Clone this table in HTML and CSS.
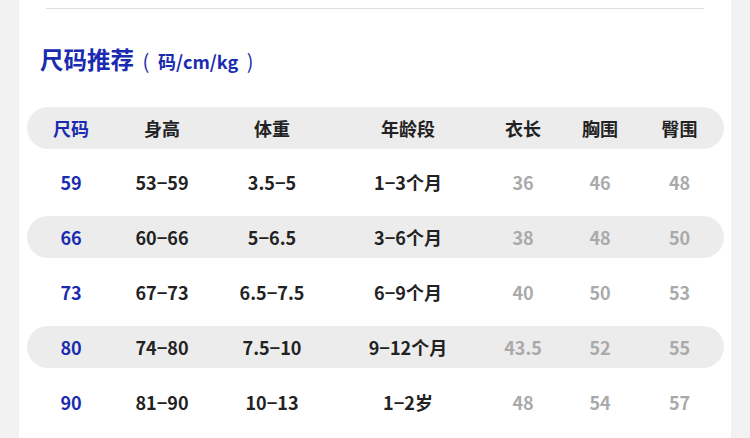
FILE: index.html
```html
<!DOCTYPE html>
<html lang="zh">
<head>
<meta charset="utf-8">
<link rel="stylesheet" href="styles.css">
</head>
<body>
<div class="panel">
  <div class="rule"></div>
  <h2 class="title">尺码推荐<span class="unit"><span class="paren">(</span>码/cm/kg<span class="paren">)</span></span></h2>
  <div class="table">
    <div class="row head">
      <div class="c size">尺码</div><div class="c">身高</div><div class="c">体重</div><div class="c">年龄段</div><div class="c">衣长</div><div class="c">胸围</div><div class="c">臀围</div>
    </div>
    <div class="row">
      <div class="c size">59</div><div class="c">53−59</div><div class="c">3.5−5</div><div class="c">1−3个月</div><div class="c g">36</div><div class="c g">46</div><div class="c g">48</div>
    </div>
    <div class="row alt">
      <div class="c size">66</div><div class="c">60−66</div><div class="c">5−6.5</div><div class="c">3−6个月</div><div class="c g">38</div><div class="c g">48</div><div class="c g">50</div>
    </div>
    <div class="row">
      <div class="c size">73</div><div class="c">67−73</div><div class="c">6.5−7.5</div><div class="c">6−9个月</div><div class="c g">40</div><div class="c g">50</div><div class="c g">53</div>
    </div>
    <div class="row alt">
      <div class="c size">80</div><div class="c">74−80</div><div class="c">7.5−10</div><div class="c">9−12个月</div><div class="c g">43.5</div><div class="c g">52</div><div class="c g">55</div>
    </div>
    <div class="row">
      <div class="c size">90</div><div class="c">81−90</div><div class="c">10−13</div><div class="c">1−2岁</div><div class="c g">48</div><div class="c g">54</div><div class="c g">57</div>
    </div>
  </div>
</div>
</body>
</html>
```

FILE: styles.css
```css
html, body {
  margin: 0;
  padding: 0;
  background: #f2f2f2;
  height: 100%;
}
body {
  font-family: "Noto Sans CJK SC", "Noto Sans", sans-serif;
  overflow: hidden;
}
.panel {
  margin-left: 19px;
  width: 712px;
  min-height: 100%;
  background: #fff;
  padding-top: 8px;
  box-sizing: border-box;
}
.rule {
  height: 1px;
  background: #dedede;
  margin: 0 27px;
}
.title {
  margin: 35px 0 0 21px;
  font-size: 23.5px;
  line-height: 30px;
  font-weight: 700;
  color: #1a2bb0;
}
.unit {
  font-size: 18px;
  font-weight: 700;
}
.paren {
  display: inline-block;
  width: 24px;
  text-align: center;
  font-weight: 400;
  font-size: 20px;
}
.table {
  margin: 31px 7px 0 8px;
  display: flex;
  flex-direction: column;
  gap: 13px;
}
.row {
  display: grid;
  grid-template-columns: 88px 94px 126px 146px 84px 70px 89px;
  height: 42px;
  align-items: center;
  border-radius: 21px;
  font-size: 18px;
  font-weight: 700;
  color: #222;
}
.head, .alt {
  background: #ececec;
}
.row + .row:nth-child(2) {
  margin-top: -1px;
}
.c {
  text-align: center;
  white-space: nowrap;
}
.size {
  color: #1a2bb0;
}
.g {
  color: #aaa;
}
```
